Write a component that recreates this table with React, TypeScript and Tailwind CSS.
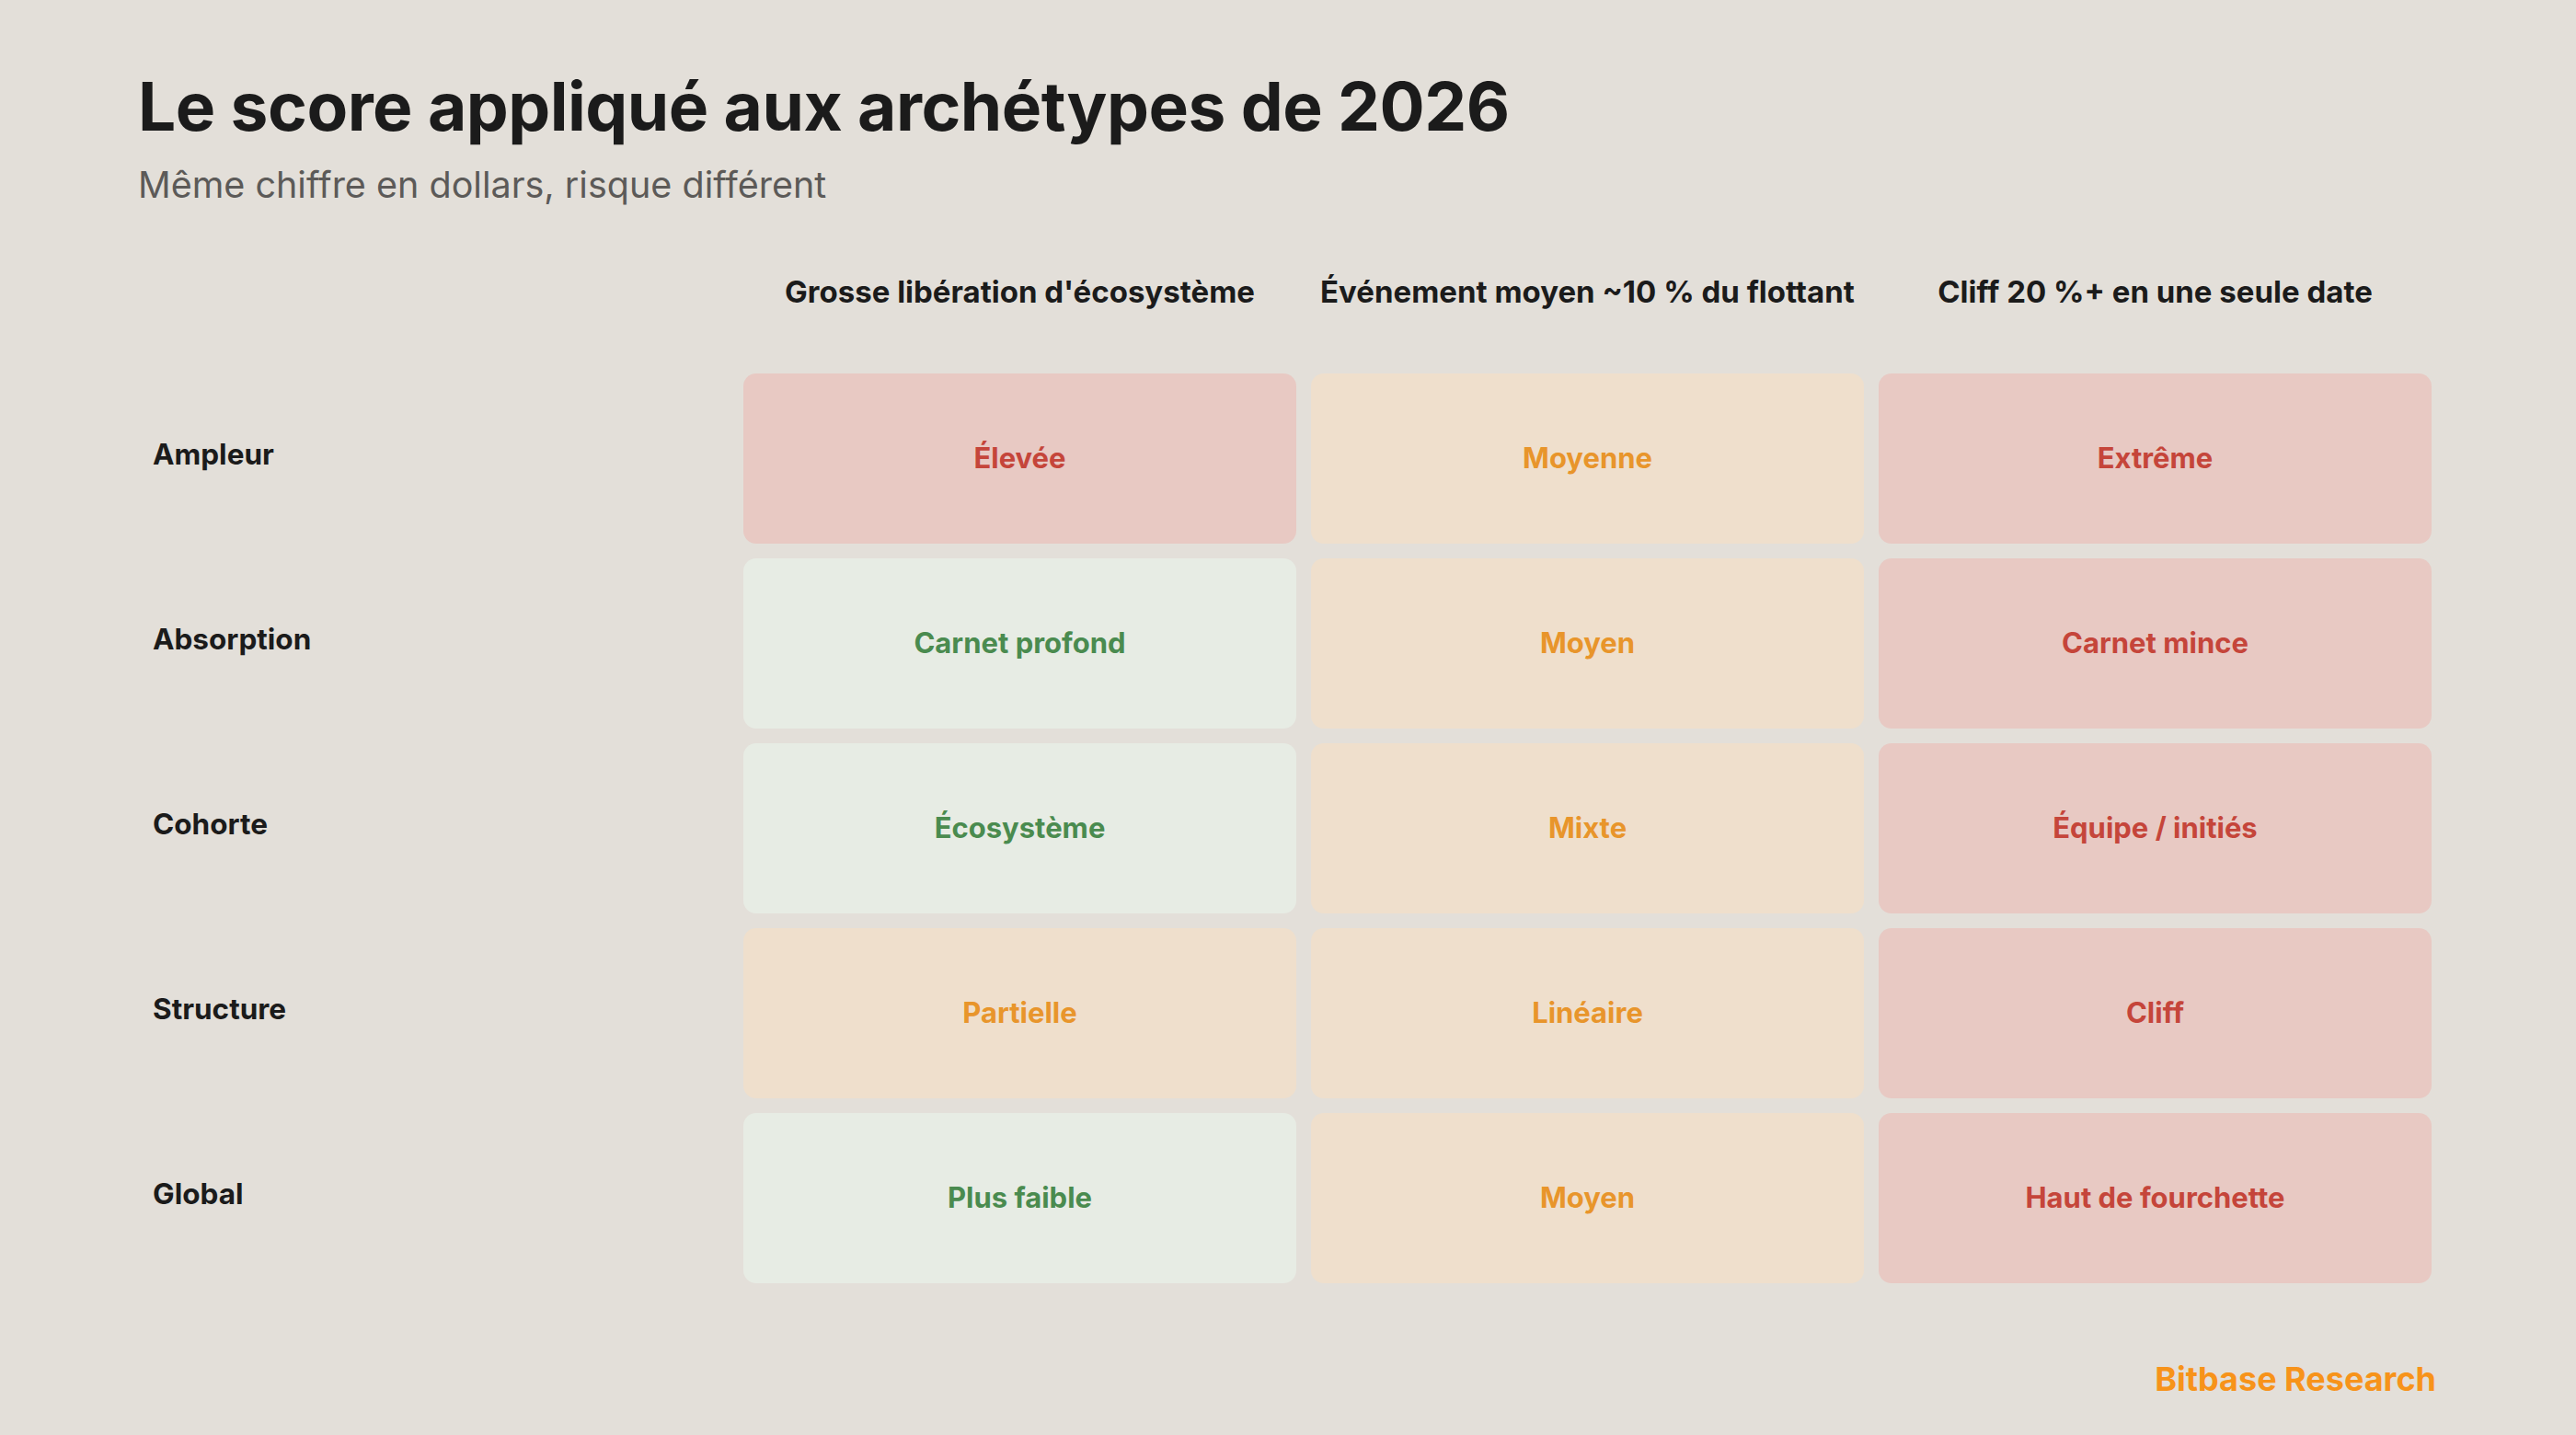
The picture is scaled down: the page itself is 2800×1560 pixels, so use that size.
import React from "react"

type Tone = "red" | "orange" | "green"

const toneClass: Record<Tone, string> = {
  red: "bg-[#e8c9c3] text-[#c5453a]",
  orange: "bg-[#efdfcc] text-[#e8952b]",
  green: "bg-[#e7ece4] text-[#4a8b4f]",
}

const columns = [
  "Grosse libération d'écosystème",
  "Événement moyen ~10 % du flottant",
  "Cliff 20 %+ en une seule date",
]

const rows: { label: string; cells: [string, Tone][] }[] = [
  {
    label: "Ampleur",
    cells: [
      ["Élevée", "red"],
      ["Moyenne", "orange"],
      ["Extrême", "red"],
    ],
  },
  {
    label: "Absorption",
    cells: [
      ["Carnet profond", "green"],
      ["Moyen", "orange"],
      ["Carnet mince", "red"],
    ],
  },
  {
    label: "Cohorte",
    cells: [
      ["Écosystème", "green"],
      ["Mixte", "orange"],
      ["Équipe / initiés", "red"],
    ],
  },
  {
    label: "Structure",
    cells: [
      ["Partielle", "orange"],
      ["Linéaire", "orange"],
      ["Cliff", "red"],
    ],
  },
  {
    label: "Global",
    cells: [
      ["Plus faible", "green"],
      ["Moyen", "orange"],
      ["Haut de fourchette", "red"],
    ],
  },
]

const grid = "grid grid-cols-[642px_601px_601px_601px] gap-x-4"

export default function App() {
  return (
    <div
      className="w-[2800px] h-[1560px] bg-[#e3dfd9] pl-[150px] pr-[152px] pt-[79px] flex flex-col"
      style={{ fontFamily: "Inter, 'Noto Sans', sans-serif" }}
    >
      <h1 className="text-[73px] leading-none font-bold text-[#1b1b1b] tracking-[-0.5px]">
        Le score appliqué aux archétypes de 2026
      </h1>
      <p className="mt-[30px] text-[39.5px] leading-none text-[#5c5a58]">
        Même chiffre en dollars, risque différent
      </p>

      {/* column headers */}
      <div className={`${grid} mt-[79px]`}>
        <div />
        {columns.map((c) => (
          <div key={c} className="text-center text-[33px] leading-none font-bold text-[#1b1b1b]">
            {c}
          </div>
        ))}
      </div>

      <div className={`${grid} gap-y-4 mt-[72px]`}>
        {rows.map((r) => (
          <React.Fragment key={r.label}>
            <div className="h-[185px] flex items-center pl-4 pb-2 text-[31.5px] font-bold text-[#1b1b1b]">
              {r.label}
            </div>
            {r.cells.map(([text, tone], i) => (
              <div
                key={i}
                className={`h-[185px] rounded-[14px] flex items-center justify-center text-[31px] font-bold ${toneClass[tone]}`}
              >
                {text}
              </div>
            ))}
          </React.Fragment>
        ))}
      </div>

      <div className="mt-auto mb-[43px] self-end text-[36px] leading-none font-bold text-[#f7931a]">
        Bitbase Research
      </div>
    </div>
  )
}
